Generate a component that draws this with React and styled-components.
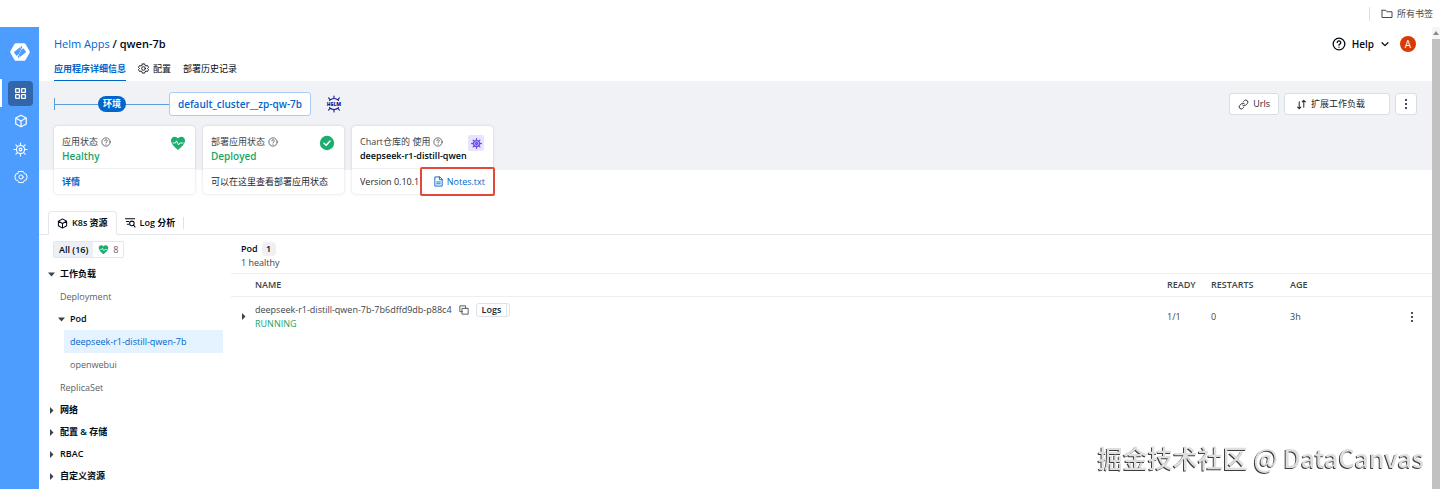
import styled, { createGlobalStyle, css } from "styled-components"

const GlobalStyle = createGlobalStyle`
*, *::before, *::after {
  box-sizing: border-box;
}
body {
  margin: 0;
  background: #fff;
  color: #000a14;
  font-family: "Open Sans", "Noto Sans CJK SC", sans-serif;
  font-size: 9px;
  line-height: 14px;
}
button {
  font: inherit;
  color: inherit;
  background: none;
  border: 0;
  padding: 0;
  cursor: pointer;
}
a {
  color: inherit;
  text-decoration: none;
}
h1, h2, p, ul {
  margin: 0;
  padding: 0;
  font: inherit;
  list-style: none;
}
svg {
  display: block;
  flex: none;
}
`

const Page = styled.div`
display: flex;
flex-direction: column;
min-height: 100vh;
`
const BookmarkBar = styled.div`
display: flex;
justify-content: flex-end;
align-items: center;
height: 27px;
padding-right: 7px;
color: #474747;
`
const BookmarkButton = styled.button`
display: flex;
align-items: center;
gap: 4px;
padding-left: 11px;
border-left: 1px solid #d3e0f5;
`
const Shell = styled.div`
display: flex;
flex: 1;
`
const Sidebar = styled.nav`
display: flex;
flex-direction: column;
align-items: center;
width: 39px;
padding-top: 15px;
background: #4c9dfe;
color: #fff;
`
const Logo = styled.a`
margin-bottom: 17px;
`
const NavItem = styled.a`
display: flex;
align-items: center;
justify-content: center;
width: 39px;
height: 28px;
border-left: 2px solid ${(p) => (p.$active ? "#fff" : "transparent")};
padding-right: 2px;
`
const NavTile = styled.span`
display: flex;
align-items: center;
justify-content: center;
width: 25px;
height: 25px;
margin-left: 2px;
border-radius: 4px;
background: ${(p) => (p.$active ? "#3366a8" : "none")};
`
const Main = styled.main`
flex: 1;
min-width: 0;
`
const Scrollbar = styled.div`
display: flex;
flex-direction: column;
align-items: center;
width: 8px;
background: #c1c1c1;
`
const ScrollArrow = styled.div`
display: flex;
justify-content: center;
align-items: center;
width: 8px;
height: 12px;
background: #f5f5f5;
`

const Header = styled.header`
display: flex;
justify-content: space-between;
height: 54px;
padding: 0 16px 0 15px;
`
const HeaderLeft = styled.div`
display: flex;
flex-direction: column;
justify-content: space-between;
padding-top: 9px;
`
const Breadcrumb = styled.h1`
font-size: 11px;
line-height: 16px;
font-weight: 600;

a {
  color: #0066cc;
  font-weight: 400;
}
`
const TabList = styled.div`
display: flex;
gap: 12px;
`
const HeaderTab = styled.a`
display: flex;
align-items: center;
gap: 4px;
height: 24px;
border-bottom: 1px solid ${(p) => (p.$active ? "#0066cc" : "transparent")};
color: ${(p) => (p.$active ? "#0066cc" : "#000a14")};
font-weight: ${(p) => (p.$active ? 600 : 400)};
`
const HeaderRight = styled.div`
display: flex;
align-items: center;
gap: 10px;
height: 34px;
`
const HelpButton = styled.button`
display: flex;
align-items: center;
gap: 6px;
font-size: 10px;
font-weight: 600;
`
const Avatar = styled.button`
width: 16px;
height: 16px;
border-radius: 50%;
background: #d63b05;
color: #fff;
font-size: 10px;
`

const Overview = styled.section`
padding: 11px 15px 0;
background: linear-gradient(#f0f2f6, #f0f2f6) 0 0 / 100% 89px no-repeat;
`
const EnvRow = styled.div`
display: flex;
align-items: center;
justify-content: space-between;
height: 24px;
`
const EnvPath = styled.div`
display: flex;
align-items: center;
`
const Connector = styled.span`
width: 43px;
height: 1px;
background: #5b9ddb;
`
const ConnectorStart = styled.span`
width: 1px;
height: 12px;
background: #5b9ddb;
`
const EnvPill = styled.span`
padding: 1px 5px;
border-radius: 8px;
background: #0066cc;
color: #fff;
font-weight: 600;
`
const EnvSelect = styled.button`
height: 24px;
margin-right: 14px;
padding: 0 8px;
border: 1px solid #a9ccf0;
border-radius: 3px;
background: #fff;
color: #0066cc;
font-size: 10px;
font-weight: 600;
`
const Actions = styled.div`
display: flex;
gap: 5px;
`
const ActionButton = styled.button`
display: flex;
align-items: center;
gap: 4px;
height: 22px;
padding: 0 ${(p) => (p.$wide ? "24px 0 11px" : p.$icon ? "4px" : "8px")};
border: 1px solid #d9dee5;
border-radius: 3px;
background: #fff;
color: #1c2630;
`

const Cards = styled.div`
display: flex;
gap: 8px;
margin-top: 10px;
`
const Card = styled.article`
width: 141px;
border-radius: 4px;
background: #fff;
box-shadow: 0 0 3px rgba(0, 10, 20, 0.16);
`
const CardTop = styled.div`
display: flex;
justify-content: space-between;
height: 43px;
padding: 9px 9px 0 8px;
border-bottom: 1px solid #eef0f3;
`
const CardLabel = styled.p`
display: flex;
align-items: center;
gap: 3px;
color: #3b444c;
white-space: nowrap;
`
const CardValue = styled.p`
color: ${(p) => (p.$plain ? "#000a14" : "#1da465")};
font-size: ${(p) => (p.$plain ? "9px" : "10px")};
font-weight: 600;
white-space: nowrap;
`
const CardIcon = styled.span`
display: flex;
align-items: center;
justify-content: center;
width: 16px;
height: 16px;
border-radius: 2px;
background: ${(p) => (p.$tint ? "#e9e3fb" : "none")};
color: #664bee;
`
const CardFooter = styled.div`
display: flex;
align-items: center;
justify-content: space-between;
height: 25px;
padding: 0 8px;
color: #1c2630;
`
const BlueLink = styled.a`
display: flex;
align-items: center;
gap: 3px;
color: #0066cc;
font-weight: ${(p) => (p.$light ? 400 : 600)};
`
const NotesSlot = styled.div`
position: relative;

&::after {
  content: "";
  position: absolute;
  inset: -8px -10px -7px -13px;
  border: 2px solid #e2483c;
  border-radius: 2px;
  pointer-events: none;
}
`

const ResourceTabs = styled.div`
display: flex;
align-items: flex-end;
margin-top: 17px;
padding-left: 9px;
border-bottom: 1px solid #e4e8ed;
`
const ResourceTab = styled.a`
display: flex;
align-items: center;
gap: 4px;
height: 23px;
padding: 0 8px;
font-weight: 600;
${(p) =>
  p.$active &&
  css`
    margin-bottom: -1px;
    height: 24px;
    border: 1px solid #e4e8ed;
    border-bottom-color: #fff;
    border-radius: 4px 4px 0 0;
    background: #fff;
  `}
`
const TabDivider = styled.span`
align-self: center;
width: 1px;
height: 12px;
background: #dde2e8;
`
const Resources = styled.div`
display: flex;
`
const Tree = styled.aside`
width: 192px;
padding: 6px 8px 0 9px;
`
const Filters = styled.div`
display: flex;
width: fit-content;
margin: 0 0 5px 5px;
border: 1px solid #e3e6ea;
border-radius: 2px;
overflow: hidden;
`
const Filter = styled.button`
display: flex;
align-items: center;
gap: 4px;
height: 15px;
padding: 0 5px;
background: ${(p) => (p.$active ? "#eceff3" : "#fff")};
color: ${(p) => (p.$active ? "#000a14" : "#596168")};
font-weight: ${(p) => (p.$active ? 600 : 400)};
`
const TreeRow = styled.button`
display: flex;
align-items: center;
gap: 5px;
width: 100%;
height: 22px;
padding-left: ${(p) => (p.$depth ? "10px" : "0")};
font-weight: 600;
`
const TreeLeaf = styled.a`
display: flex;
align-items: center;
height: 23px;
margin-left: ${(p) => (p.$depth === 2 ? "16px" : "6px")};
padding-left: 6px;
background: ${(p) => (p.$selected ? "#e5f2ff" : "none")};
color: ${(p) => (p.$selected ? "#0066cc" : "#596168")};
`
const Detail = styled.section`
flex: 1;
min-width: 0;
padding-top: 7px;
`
const DetailHead = styled.div`
padding: 0 10px 3px;
color: #3b444c;
`
const DetailTitle = styled.h2`
display: flex;
align-items: center;
gap: 4px;
color: #000a14;
font-size: 9px;
font-weight: 600;
`
const Count = styled.span`
width: 14px;
border-radius: 4px;
background: #eef0f3;
text-align: center;
`
const Table = styled.table`
width: 100%;
table-layout: fixed;
border-collapse: collapse;
color: #3b444c;

th, td {
  padding: 0;
  text-align: left;
}
th {
  height: 23px;
  border-top: 1px solid #eceff2;
  border-bottom: 1px solid #eceff2;
  font-weight: 600;
}
td {
  height: 40px;
}
`
const Col = styled.col`
width: ${(p) => p.$width};
`
const RowButton = styled.button`
display: block;
margin-left: ${(p) => (p.$inset ? "9px" : "0")};
`
const PodName = styled.div`
display: flex;
align-items: center;
gap: 7px;
`
const LogsButton = styled.button`
display: flex;
gap: 5px;
padding: 0 5px;
border: 1px solid #dfe3e8;
border-radius: 3px;
color: #1c2630;
line-height: 12px;
font-weight: 600;

&::after {
  content: "";
  width: 1px;
  background: #e3e6ea;
  margin-right: -3px;
}
`
const Running = styled.div`
color: #1da465;
`
const Watermark = styled.div`
position: fixed;
right: 16px;
bottom: 14px;
color: #dedede;
font-family: "Noto Sans CJK SC", sans-serif;
font-size: 25px;
line-height: 36px;
font-weight: 500;
text-shadow: -1px 1px 0 #3c3c3c;
pointer-events: none;
`

function Line({ size = 12, width = 1.6, children }) {
  return (
    <svg width={size} height={size} viewBox="0 0 24 24" fill="none" stroke="currentColor" strokeWidth={width} strokeLinecap="round" strokeLinejoin="round" aria-hidden="true">
      {children}
    </svg>
  )
}

const BrandIcon = () => (
  <svg width="20" height="20" viewBox="0 0 20 20" aria-hidden="true">
    <path d="M6 1.2h8q1 0 1.500.8l4 7.100q.5.900 0 1.800l-4 7q-.5.900-1.500.900H6q-1 0-1.500-.9l-4-7q-.5-.900 0-1.800l4-7.100Q5 1.200 6 1.200z" fill="#fff" />
    <path d="M10.800 4.800L4.300 9.800q-.4.400-.1.900l1.900 2.800q.4.500 1 .1L9 11.900l.3-2.300z" fill="#4c9dfe" />
    <path d="M9.200 15.400l6.500-5q.4-.400.1-.900l-1.900-2.800q-.4-.5-1-.1L11 8.300l-.3 2.300z" fill="#4c9dfe" />
    <path d="M11.900 4.300L9.300 10l1.400.2-2.600 5.600" fill="none" stroke="#4c9dfe" strokeWidth="1.200" />
  </svg>
)
const GridIcon = () => (
  <Line size={13} width={2.4}>
    <rect x="3" y="3" width="7" height="7" rx="1" />
    <rect x="14" y="3" width="7" height="7" rx="1" />
    <rect x="3" y="14" width="7" height="7" rx="1" />
    <rect x="14" y="14" width="7" height="7" rx="1" />
  </Line>
)
const CubeIcon = ({ size = 14, width = 2 }) => (
  <Line size={size} width={width}>
    <path d="M12 2l9 5v10l-9 5-9-5V7z M3 7l9 5 9-5 M12 12v10" />
  </Line>
)
const WheelIcon = ({ size = 15, width = 1.8 }) => (
  <Line size={size} width={width}>
    <circle cx="12" cy="12" r="6.500" />
    <circle cx="12" cy="12" r="2.200" />
    <path d="M12 1.500v4M12 18.500v4M1.500 12h4M18.500 12h4M4.600 4.600l2.800 2.800M16.600 16.600l2.800 2.800M4.600 19.400l2.800-2.800M16.600 7.400l2.800-2.800" />
  </Line>
)
const NutIcon = ({ size = 14 }) => (
  <Line size={size} width={1.700}>
    <path d="M8 2.500h8l1.500 3.500 3.500 1 1.500 5-1.500 5-3.500 1-1.500 3.500H8L6.500 18 3 17l-1.500-5L3 7l3.500-1z" />
    <circle cx="12" cy="12" r="3.600" />
  </Line>
)
const GearIcon = () => (
  <Line size={11} width={1.900}>
    <circle cx="12" cy="12" r="4" />
    <path d="M9.500 2h5l.8 3.200 2.200 1.300 3.200-1 2.300 4.200-2.300 2.300 2.300 2.400-2.300 4.200-3.300-1-2.100 1.300-.8 3.100h-5l-.8-3.100-2.200-1.300-3.200 1L1 14.400 3.300 12 1 9.700l2.300-4.200 3.200 1 2.200-1.300z" />
  </Line>
)
const HelpIcon = ({ size = 10, width = 1.800 }) => (
  <Line size={size} width={width}>
    <circle cx="12" cy="12" r="10" />
    <path d="M9 9.500a3 3 0 1 1 4.300 2.700c-.9.400-1.300.9-1.300 1.800M12 17.300v.2" />
  </Line>
)
const FolderIcon = () => (
  <Line size={12} width={2}>
    <path d="M2 5.500V19h20V7.500H12l-2.500-3H2z" />
  </Line>
)
const LinkIcon = () => (
  <Line size={11} width={2}>
    <path d="M10 13.500a4.500 4.500 0 0 0 6.400.3l4-4a4.500 4.500 0 0 0-6.300-6.400L12 5.500" />
    <path d="M14 10.500a4.500 4.500 0 0 0-6.400-.3l-4 4a4.500 4.500 0 0 0 6.300 6.400l2.100-2.100" />
  </Line>
)
const ScaleIcon = () => (
  <Line size={11} width={2.200}>
    <path d="M7 6v15M3.500 17.500L7 21l3.500-3.500M17 18V3M13.500 6.500L17 3l3.500 3.500" />
  </Line>
)
const DotsIcon = () => (
  <svg width="12" height="12" viewBox="0 0 12 12" fill="#1c2630" aria-hidden="true">
    <circle cx="6" cy="2" r="1.100" />
    <circle cx="6" cy="6" r="1.100" />
    <circle cx="6" cy="10" r="1.100" />
  </svg>
)
const HeartIcon = ({ size = 16 }) => (
  <svg width={size} height={size} viewBox="0 0 16 16" aria-hidden="true">
    <path d="M8 15C4.500 12 1 9.300 1 5.600 1 3.200 2.700 1.700 4.700 1.700c1.400 0 2.600.7 3.300 1.900.7-1.200 1.900-1.900 3.300-1.900 2 0 3.700 1.500 3.700 3.900C15 9.300 11.500 12 8 15z" fill="#1dad70" />
    <path d="M2.500 8h3l1-2.200L8.500 10l1.200-2h3.800" fill="none" stroke="#fff" strokeWidth="0.900" strokeLinejoin="round" />
  </svg>
)
const CheckIcon = () => (
  <svg width="16" height="16" viewBox="0 0 16 16" aria-hidden="true">
    <circle cx="8" cy="8" r="7.200" fill="#1dad70" />
    <path d="M5 8.200l2.200 2.100L11 6" fill="none" stroke="#fff" strokeWidth="1.500" strokeLinecap="round" strokeLinejoin="round" />
  </svg>
)
const FileIcon = () => (
  <Line size={11} width={2}>
    <path d="M14 2H4v20h16V8zM14 2v6h6M8 13h8M8 17h8" />
  </Line>
)
const LogSearchIcon = () => (
  <Line size={11} width={2.200}>
    <path d="M1 4h20M3 10h5M5 16h3" />
    <circle cx="15" cy="14" r="5" />
    <path d="M18.500 17.500L22 22" />
  </Line>
)
const CopyIcon = () => (
  <Line size={10} width={2}>
    <path d="M8 8h14v14H8zM16 8V2H2v14h6" />
  </Line>
)
const ChevronIcon = () => (
  <Line size={10} width={3}>
    <path d="M5 9l7 7 7-7" />
  </Line>
)
const Caret = ({ open }) => (
  <svg width="7" height="7" viewBox="0 0 7 7" fill="#3b444c" aria-hidden="true">
    <path d={open ? "M0 1.500h7L3.500 5.500z" : "M2 0l3.500 3.500L2 7z"} />
  </svg>
)
// Helm mark: the spokes are drawn, the wordmark stays as text
const HelmIcon = () => (
  <svg width="18" height="18" viewBox="0 0 18 18" role="img" aria-label="Helm">
    <g fill="none" stroke="#1a1a8c" strokeWidth="1.100" strokeLinecap="round">
      <path d="M4.500 5.300Q9 1.800 13.500 5.300M4.500 12.700Q9 16.200 13.500 12.700M9 1v2.500M9 14.500V17M3.600 2.800l1.400 1.700M14.400 2.800L13 4.500M3.600 15.200L5 13.500M14.400 15.200L13 13.500" />
    </g>
    <text x="9" y="10.900" textAnchor="middle" fontFamily="Open Sans, sans-serif" fontSize="5" fontWeight="800" fill="#1a1a8c">HELM</text>
  </svg>
)

const navItems = [
  { name: "Applications", icon: <GridIcon />, active: true },
  { name: "Charts", icon: <CubeIcon /> },
  { name: "Clusters", icon: <WheelIcon /> },
  { name: "Settings", icon: <NutIcon /> },
]

const closedGroups = ["网络", "配置 & 存储", "RBAC", "自定义资源"]

function StatusCard({ label, value, plain, icon, tint, children }) {
  return (
    <Card>
      <CardTop>
        <div>
          <CardLabel>
            {label}
            <HelpIcon />
          </CardLabel>
          <CardValue $plain={plain}>{value}</CardValue>
        </div>
        <CardIcon $tint={tint}>{icon}</CardIcon>
      </CardTop>
      <CardFooter>{children}</CardFooter>
    </Card>
  )
}

function ResourceTree() {
  return (
    <Tree>
      <Filters>
        <Filter $active>All (16)</Filter>
        <Filter>
          <HeartIcon size={11} />8
        </Filter>
      </Filters>
      <TreeRow><Caret open />工作负载</TreeRow>
      <TreeLeaf href="#deployment">Deployment</TreeLeaf>
      <TreeRow $depth={1}><Caret open />Pod</TreeRow>
      <TreeLeaf href="#deepseek" $depth={2} $selected>deepseek-r1-distill-qwen-7b</TreeLeaf>
      <TreeLeaf href="#openwebui" $depth={2}>openwebui</TreeLeaf>
      <TreeLeaf href="#replicaset">ReplicaSet</TreeLeaf>
      {closedGroups.map((name) => (
        <TreeRow key={name}><Caret />{name}</TreeRow>
      ))}
    </Tree>
  )
}

function PodDetail() {
  return (
    <Detail>
      <DetailHead>
        <DetailTitle>Pod <Count>1</Count></DetailTitle>
        <p>1 healthy</p>
      </DetailHead>
      <Table>
        <colgroup>
          <Col $width="24px" />
          <Col $width="auto" />
          <Col $width="44px" />
          <Col $width="79px" />
          <Col $width="116px" />
          <Col $width="26px" />
        </colgroup>
        <thead>
          <tr>
            <th></th>
            <th>NAME</th>
            <th>READY</th>
            <th>RESTARTS</th>
            <th>AGE</th>
            <th></th>
          </tr>
        </thead>
        <tbody>
          <tr>
            <td><RowButton $inset aria-label="Expand pod"><Caret /></RowButton></td>
            <td>
              <PodName>
                deepseek-r1-distill-qwen-7b-7b6dffd9db-p88c4
                <RowButton aria-label="Copy name"><CopyIcon /></RowButton>
                <LogsButton>Logs</LogsButton>
              </PodName>
              <Running>RUNNING</Running>
            </td>
            <td>1/1</td>
            <td>0</td>
            <td>3h</td>
            <td><RowButton aria-label="Pod actions"><DotsIcon /></RowButton></td>
          </tr>
        </tbody>
      </Table>
    </Detail>
  )
}

export default function App() {
  return (
    <Page>
      <GlobalStyle />
      <BookmarkBar>
        <BookmarkButton><FolderIcon />所有书签</BookmarkButton>
      </BookmarkBar>
      <Shell>
        <Sidebar>
          <Logo href="#home" aria-label="Home"><BrandIcon /></Logo>
          {navItems.map((item) => (
            <NavItem key={item.name} href={"#" + item.name} aria-label={item.name} $active={item.active}>
              <NavTile $active={item.active}>{item.icon}</NavTile>
            </NavItem>
          ))}
        </Sidebar>
        <Main>
          <Header>
            <HeaderLeft>
              <Breadcrumb><a href="#apps">Helm Apps</a> / qwen-7b</Breadcrumb>
              <TabList>
                <HeaderTab href="#details" $active>应用程序详细信息</HeaderTab>
                <HeaderTab href="#config"><GearIcon />配置</HeaderTab>
                <HeaderTab href="#history">部署历史记录</HeaderTab>
              </TabList>
            </HeaderLeft>
            <HeaderRight>
              <HelpButton><HelpIcon size={14} width={2.200} />Help<ChevronIcon /></HelpButton>
              <Avatar aria-label="Account">A</Avatar>
            </HeaderRight>
          </Header>
          <Overview>
            <EnvRow>
              <EnvPath>
                <ConnectorStart />
                <Connector />
                <EnvPill>环境</EnvPill>
                <Connector />
                <EnvSelect>default_cluster__zp-qw-7b</EnvSelect>
                <HelmIcon />
              </EnvPath>
              <Actions>
                <ActionButton><LinkIcon />Urls</ActionButton>
                <ActionButton $wide><ScaleIcon />扩展工作负载</ActionButton>
                <ActionButton $icon aria-label="More actions"><DotsIcon /></ActionButton>
              </Actions>
            </EnvRow>
            <Cards>
              <StatusCard label="应用状态" value="Healthy" icon={<HeartIcon />}>
                <BlueLink href="#status">详情</BlueLink>
              </StatusCard>
              <StatusCard label="部署应用状态" value="Deployed" icon={<CheckIcon />}>
                可以在这里查看部署应用状态
              </StatusCard>
              <StatusCard label="Chart仓库的 使用" value="deepseek-r1-distill-qwen" plain tint icon={<WheelIcon size={11} width={2.800} />}>
                Version 0.10.1
                <NotesSlot>
                  <BlueLink href="#notes" $light><FileIcon />Notes.txt</BlueLink>
                </NotesSlot>
              </StatusCard>
            </Cards>
          </Overview>
          <ResourceTabs>
            <ResourceTab href="#k8s" $active><CubeIcon size={11} width={2.200} />K8s 资源</ResourceTab>
            <ResourceTab href="#logs"><LogSearchIcon />Log 分析</ResourceTab>
            <TabDivider />
          </ResourceTabs>
          <Resources>
            <ResourceTree />
            <PodDetail />
          </Resources>
        </Main>
        <Scrollbar>
          <ScrollArrow>
            <svg width="6" height="4" viewBox="0 0 6 4" fill="#8a8a8a" aria-hidden="true"><path d="M0 4l3-4 3 4z" /></svg>
          </ScrollArrow>
        </Scrollbar>
      </Shell>
      <Watermark>掘金技术社区 @ DataCanvas</Watermark>
    </Page>
  )
}
